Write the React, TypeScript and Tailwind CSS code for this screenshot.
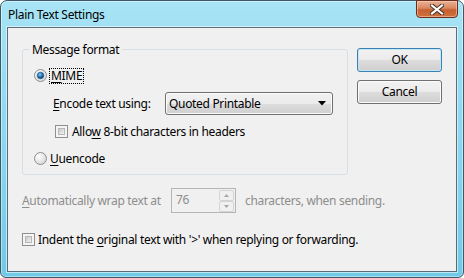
const font = "font-['Segoe_UI','Noto_Sans',sans-serif] text-[12px] leading-[15px] tracking-[-0.32px]";

function Radio({ checked, id }: { checked?: boolean; id: string }) {
  return (
    <svg width="13" height="13" viewBox="0 0 13 13" className="shrink-0">
      <defs>
        <radialGradient id={`${id}-bg`} cx="35%" cy="35%" r="70%">
          <stop offset="0%" stopColor="#ffffff" />
          <stop offset="100%" stopColor="#d6d6d6" />
        </radialGradient>
        <radialGradient id={`${id}-dot`} cx="40%" cy="35%" r="65%">
          <stop offset="0%" stopColor="#8fd0f5" />
          <stop offset="55%" stopColor="#2a77b8" />
          <stop offset="100%" stopColor="#0d3a6a" />
        </radialGradient>
      </defs>
      <circle cx="6.5" cy="6.5" r="6" fill={`url(#${id}-bg)`} stroke="#8e8f8f" />
      {checked && (
        <>
          <circle cx="6.5" cy="6.5" r="4.2" fill="#cfe6f4" />
          <circle cx="6.5" cy="6.5" r="3.2" fill={`url(#${id}-dot)`} stroke="#174a7c" strokeWidth="0.6" />
        </>
      )}
    </svg>
  );
}

function Check() {
  return (
    <div className="w-[13px] h-[13px] shrink-0 border border-[#8e8f8f] bg-[#f4f4f4] p-[2px]">
      <div className="w-full h-full border border-[#b8b8b8] bg-[linear-gradient(135deg,#c8c8c8,#f2f2f2)]" />
    </div>
  );
}

function VistaButton({ label, def }: { label: string; def?: boolean }) {
  return (
    <button
      className={`w-[85px] h-[24px] rounded-[3px] border ${
        def
          ? "border-[#3c7fb1] shadow-[inset_0_0_0_1px_#bfe7f8]"
          : "border-[#707070] shadow-[inset_0_0_0_1px_#fbfbfb]"
      } bg-[linear-gradient(180deg,#f2f2f2_0%,#ebebeb_50%,#dddddd_51%,#cfcfcf_100%)] text-black ${font} pb-[1px]`}
    >
      {label}
    </button>
  );
}

export default function App() {
  return (
    <div className={`w-[464px] h-[278px] ${font} text-black`}>
      <div className="w-full h-full flex flex-col rounded-t-[7px] rounded-b-[6px] border border-[#3d5868] bg-[linear-gradient(180deg,#a8e4f5_0%,#95dcf1_30%,#80d3ec_70%,#6ecae6_100%)] shadow-[inset_0_0_0_1px_rgba(255,255,255,0.45)]">
        {/* title bar */}
        <div className="h-[26px] flex items-start shrink-0">
          <span className="pl-[7px] pt-[6px]">Plain Text Settings</span>
          <div className="ml-auto mr-[5px] w-[42px] h-[18px] -mt-[1px] rounded-b-[4px] border border-[#6b2d1c] bg-[linear-gradient(180deg,#eab196_0%,#d98860_45%,#c5602f_55%,#d0713f_100%)] shadow-[inset_0_0_0_1px_rgba(255,220,200,0.5)] flex items-center justify-center">
            <svg width="14" height="11" viewBox="0 0 14 11">
              <path d="M2 1.5 L12 9.5 M12 1.5 L2 9.5" stroke="#3b2a24" strokeWidth="4" strokeLinecap="square" />
              <path d="M2 1.5 L12 9.5 M12 1.5 L2 9.5" stroke="#ffffff" strokeWidth="2.2" strokeLinecap="square" />
            </svg>
          </div>
        </div>

        {/* client area */}
        <div className="mx-[6px] h-[245px] border border-[#5a6c7a] bg-[#f0f0f0] shadow-[0_0_0_1px_rgba(255,255,255,0.55)] flex flex-col pl-[14px]">
          <div className="flex items-start">
            <fieldset className="mt-[14px] w-[326px] h-[133px] border border-[#d5dfe5] rounded-[3px]">
              <legend className="ml-[6px] px-[3px]">Message format</legend>
              <div className="flex flex-col pl-[11px]">
                <div className="flex items-center mt-[10px] h-[17px]">
                  <Radio checked id="r1" />
                  <span className="ml-[2px] border border-dotted border-black px-[1px] leading-[14px]">
                    <u className="underline-offset-[2px]">M</u>IME
                  </span>
                </div>
                <div className="flex items-center mt-[8px] pl-[19px]">
                  <span className="w-[112px]">
                    <u className="underline-offset-[2px]">E</u>ncode text using:
                  </span>
                  <div className="w-[168px] h-[23px] rounded-[3px] border border-[#707070] shadow-[inset_0_0_0_1px_#fbfbfb] bg-[linear-gradient(180deg,#f2f2f2_0%,#ebebeb_50%,#dddddd_51%,#cfcfcf_100%)] flex items-center pl-[3px] pr-[6px]">
                    <span className="flex-1">Quoted Printable</span>
                    <svg width="8" height="5" viewBox="0 0 8 5">
                      <path d="M0 0 H8 L4 4.5 Z" fill="#000" />
                    </svg>
                  </div>
                </div>
                <div className="flex items-center mt-[9px] pl-[21px]">
                  <Check />
                  <span className="ml-[4px]">
                    Allo<u className="underline-offset-[2px]">w</u> 8-bit characters in headers
                  </span>
                </div>
                <div className="flex items-center mt-[12px]">
                  <Radio id="r2" />
                  <span className="ml-[3px]">
                    <u className="underline-offset-[2px]">U</u>uencode
                  </span>
                </div>
              </div>
            </fieldset>
            <div className="ml-[9px] mt-[20px] flex flex-col gap-[8px]">
              <VistaButton label="OK" def />
              <VistaButton label="Cancel" />
            </div>
          </div>

          {/* wrap row */}
          <div className="flex items-center mt-[13px] text-[#8d8d8d]">
            <span className="w-[149px]">
              <u className="underline-offset-[2px]">A</u>utomatically wrap text at
            </span>
            <div className="w-[65px] h-[25px] border border-[#b5b5b5] bg-[#f0f0f0] flex items-start pl-[4px] pt-[3px] pr-[1px]">
              <span className="flex-1 text-[#8d8d8d]">76</span>
              <div className="w-[15px] h-[22px] mt-[-2px] flex flex-col">
                <div className="h-[11px] border border-[#d4d4d4] rounded-[2px] flex items-center justify-center">
                  <svg width="5" height="3" viewBox="0 0 5 3"><path d="M0 3 L2.5 0 L5 3 Z" fill="#a8a8a8" /></svg>
                </div>
                <div className="h-[11px] border border-[#d4d4d4] rounded-[2px] flex items-center justify-center">
                  <svg width="5" height="3" viewBox="0 0 5 3"><path d="M0 0 L2.5 3 L5 0 Z" fill="#a8a8a8" /></svg>
                </div>
              </div>
            </div>
            <span className="ml-[9px]">characters, when sending.</span>
          </div>

          {/* indent row */}
          <div className="flex items-center mt-[19px]">
            <Check />
            <span className="ml-[3px]">
              Indent the <u className="underline-offset-[2px]">o</u>riginal text with '&gt;' when replying or forwarding.
            </span>
          </div>
        </div>
      </div>
    </div>
  );
}
